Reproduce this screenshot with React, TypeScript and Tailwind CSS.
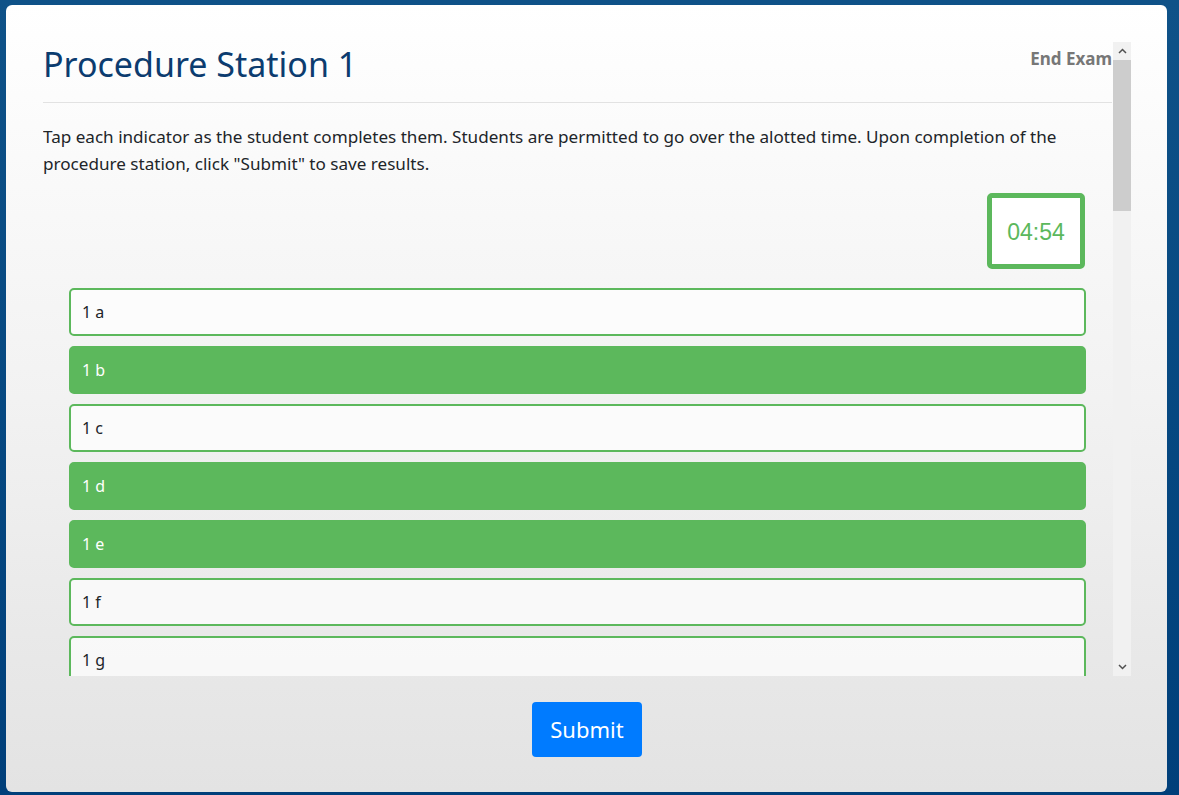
const indicators = ["1 a", "1 b", "1 c", "1 d", "1 e", "1 f", "1 g"];

const completed = new Set(["1 b", "1 d", "1 e"]);

function Indicator({ label, done }: { label: string; done: boolean }) {
  return (
    <li
      className={
        done
          ? "h-[48px] shrink-0 flex items-center px-[11px] rounded-[5px] border-2 border-[#5cb85c] bg-[#5cb85c] text-white text-[16px]"
          : "h-[48px] shrink-0 flex items-center px-[11px] rounded-[5px] border-2 border-[#5cb85c] bg-white/70 text-[#212529] text-[16px]"
      }
    >
      {label}
    </li>
  );
}

function ScrollTrack() {
  return (
    <div className="w-[18px] shrink-0 flex flex-col bg-[#f1f1f1]">
      <div className="h-[18px] flex items-center justify-center text-[#505050]">
        <svg width="9" height="6" viewBox="0 0 9 6" fill="none" stroke="currentColor" strokeWidth="1.5">
          <path d="M1 5l3.5-3.5L8 5" />
        </svg>
      </div>
      <div className="h-[151px] bg-[#cdcdcd]" />
      <div className="flex-1" />
      <div className="h-[18px] flex items-center justify-center text-[#505050]">
        <svg width="9" height="6" viewBox="0 0 9 6" fill="none" stroke="currentColor" strokeWidth="1.5">
          <path d="M1 1l3.5 3.5L8 1" />
        </svg>
      </div>
    </div>
  );
}

export default function App() {
  return (
    <div
      className="w-[1179px] h-[795px] bg-gradient-to-b from-[#0f5288] to-[#003f7a] pl-[6px] pr-[12px] pt-[5px] pb-[3px]"
      style={{ fontFamily: '"Noto Sans", "Open Sans", sans-serif' }}
    >
      <div className="h-full rounded-[6px] bg-gradient-to-b from-white via-[#f2f2f2] to-[#e3e3e3] flex flex-col pl-[37px] pr-[36px] pt-[37px]">
        <div className="h-[634px] flex">
          <div className="flex-1 overflow-hidden pr-[1px]">
            <div className="flex justify-between items-start">
              <h1 className="text-[34px] leading-[45px] text-[#0c3c6f]">Procedure Station 1</h1>
              <button className="mt-[4px] text-[17px] font-bold text-[#777777]">End Exam</button>
            </div>
            <hr className="mt-[15px] border-t border-[#e2e2e2]" />
            <p className="mt-[20px] text-[17.1px] leading-[27px] text-[#212529]">
              Tap each indicator as the student completes them. Students are permitted to go over the alotted time. Upon completion of the procedure station, click "Submit" to save results.
            </p>
            <div className="mt-[16px] flex justify-end pr-[27px]">
              <div className="w-[98px] h-[76px] rounded-[5px] border-[5px] border-[#5cb85c] bg-white flex items-center justify-center">
                <span className="mt-[2px] text-[23px] text-[#5cb85c]" style={{ fontFamily: '"Liberation Sans", Arial, sans-serif' }}>
                  04:54
                </span>
              </div>
            </div>
            <ul className="mt-[19px] mx-[26px] flex flex-col gap-[10px]">
              {indicators.map((label) => (
                <Indicator key={label} label={label} done={completed.has(label)} />
              ))}
            </ul>
          </div>
          <ScrollTrack />
        </div>
        <div className="flex justify-center pt-[26px]">
          <button className="w-[110px] h-[55px] rounded-[4px] bg-[#007bff] text-white text-[22px]">Submit</button>
        </div>
      </div>
    </div>
  );
}
